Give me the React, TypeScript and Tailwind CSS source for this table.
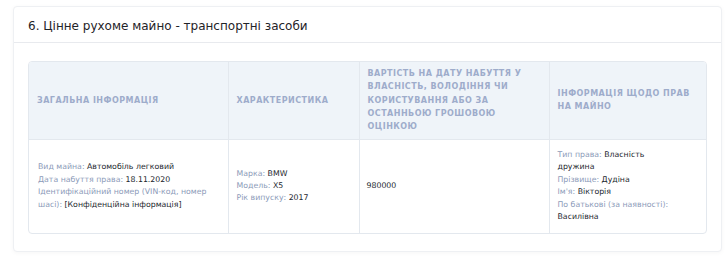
import React from 'react';

// Рядок "підпис: значення" у комірці таблиці
const Field = ({ label, value }: { label: string; value: string }) => (
  <div>
    <span className="text-[#8b9ab8]">{label}: </span>
    <span className="text-[#23272e] font-medium">{value}</span>
  </div>
);

const headers = [
  'Загальна інформація',
  'Характеристика',
  'Вартість на дату набуття у власність, володіння чи користування або за останньою грошовою оцінкою',
  'Інформація щодо прав на майно',
];

const App = () => {
  return (
    <div className="min-h-screen bg-white pt-[6px] pl-[13px]" style={{ fontFamily: '"DejaVu Sans", sans-serif' }}>
      <div className="w-[709px] rounded-[4px] border border-[#eef0f3] bg-white shadow-[0_1px_4px_rgba(0,0,0,0.04)]">
        <div className="h-[36px] border-b border-[#e8eaee] px-[14px] pt-[2px] flex items-center">
          <h2 className="text-[12px] text-[#1f2328]">6. Цінне рухоме майно - транспортні засоби</h2>
        </div>

        <div className="px-[14px] pt-[18px] pb-[17px]">
          <div className="overflow-hidden rounded-[4px] border border-[#e3e8ee]">
            <table className="w-full table-fixed border-collapse">
              <colgroup>
                <col className="w-[199px]" />
                <col className="w-[131px]" />
                <col className="w-[190px]" />
                <col />
              </colgroup>
              <thead>
                <tr className="h-[77px] bg-[#eff4f9]">
                  {headers.map((h, i) => (
                    <th
                      key={i}
                      className={`px-[8px] text-left align-middle text-[8px] leading-[13.3px] font-bold uppercase tracking-[0.06em] text-[#9eaccb] ${i > 0 ? 'border-l border-[#e3e8ee]' : ''}`}
                    >
                      {h}
                    </th>
                  ))}
                </tr>
              </thead>
              <tbody className="text-[7.8px] leading-[12.4px]">
                <tr className="h-[94px] border-t border-[#e3e8ee]">
                  <td className="pl-[9px] pr-[8px] align-middle">
                    <Field label="Вид майна" value="Автомобіль легковий" />
                    <Field label="Дата набуття права" value="18.11.2020" />
                    <Field label="Ідентифікаційний номер (VIN-код, номер шасі)" value="[Конфіденційна інформація]" />
                  </td>
                  <td className="px-[8px] align-middle border-l border-[#e3e8ee]">
                    <Field label="Марка" value="BMW" />
                    <Field label="Модель" value="X5" />
                    <Field label="Рік випуску" value="2017" />
                  </td>
                  <td className="px-[7px] align-middle border-l border-[#e3e8ee] text-[#23272e]">980000</td>
                  <td className="pl-[8px] pr-[30px] align-middle border-l border-[#e3e8ee]">
                    <Field label="Тип права" value="Власність дружина" />
                    <Field label="Прізвище" value="Дудіна" />
                    <Field label="Ім'я" value="Вікторія" />
                    <Field label="По батькові (за наявності)" value="Василівна" />
                  </td>
                </tr>
              </tbody>
            </table>
          </div>
        </div>
      </div>
    </div>
  );
};

export default App;
